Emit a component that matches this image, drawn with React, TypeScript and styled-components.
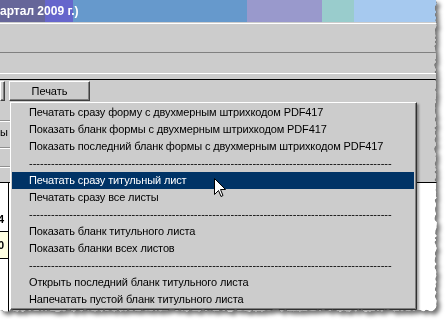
import styled, { createGlobalStyle } from 'styled-components';

const GlobalStyle = createGlobalStyle`
  html, body {
    margin: 0;
    padding: 0;
    background: #ffffff;
  }

  body {
    font-family: 'Liberation Sans', Arial, sans-serif;
  }
`;

const MENU_ITEMS: (string | null)[] = [
  'Печатать сразу форму с двухмерным штрихкодом PDF417',
  'Показать бланк формы с двухмерным штрихкодом PDF417',
  'Показать последний бланк формы с двухмерным штрихкодом PDF417',
  null,
  'Печатать сразу титульный лист',
  'Печатать сразу все листы',
  null,
  'Показать бланк титульного листа',
  'Показать бланки всех листов',
  null,
  'Открыть последний бланк титульного листа',
  'Напечатать пустой бланк титульного листа',
];

const ACTIVE_INDEX = 4;

// torn paper edge along the right and bottom sides
const tornEdge = (() => {
  let seed = 11;
  const rnd = () => {
    seed = (seed * 9301 + 49297) % 233280;
    return seed / 233280;
  };
  const pts: string[] = ['0 0', '436px 0'];
  for (let y = 2; y < 310; y += 2) {
    pts.push(`${(434.5 + rnd() * 2.5).toFixed(1)}px ${y}px`);
  }
  for (let x = 434; x > 0; x -= 2) {
    pts.push(`${x}px ${(309.5 + rnd() * 2.5).toFixed(1)}px`);
  }
  pts.push('0 311px');
  return `polygon(${pts.join(', ')})`;
})();

export default function App() {
  return (
    <Page>
      <GlobalStyle />
      <Shadow>
        <Sheet>
          <TitleBar>артал 2009 г.)</TitleBar>
          <TopBand />
          <MiddleBand />
          <LowBand />
          <TabRow>
            <TabButton $width={5} />
            <TabButton $width={81}>Печать</TabButton>
          </TabRow>
          <FormArea>
            <FieldLine $height={18} />
            <FieldLine $height={26}>
              <FieldText>ны</FieldText>
            </FieldLine>
            <FieldLine $height={18} />
          </FormArea>
          <GridArea>
            <GridColumn>
              <GridCell $height={24} />
              <GridCell $height={24} $bordered>
                4
              </GridCell>
              <GridCell $height={26} $bordered $yellow>
                0
              </GridCell>
            </GridColumn>
          </GridArea>

          <Menu>
            {MENU_ITEMS.map((item, i) =>
              item === null ? (
                <Separator key={i}>{'-'.repeat(99)}</Separator>
              ) : (
                <MenuItem key={i} $active={i === ACTIVE_INDEX}>
                  {item}
                </MenuItem>
              )
            )}
          </Menu>

          <Cursor width="12" height="20" viewBox="0 0 12 20">
            <path
              d="M0.5 0.5 L0.5 16.5 L4.5 12.5 L7 18.5 L9 17.5 L6.5 11.5 L11.5 11.5 Z"
              fill="#ffffff"
              stroke="#000000"
              strokeWidth="1"
            />
          </Cursor>
        </Sheet>
      </Shadow>
    </Page>
  );
}

const Page = styled.div`
  width: 447px;
  height: 328px;
  background: #ffffff;
  overflow: hidden;
`;

const Shadow = styled.div`
  width: 440px;
  filter: drop-shadow(0 0 0.6px #000000) drop-shadow(3px 3px 2px rgba(0, 0, 0, 0.55));
`;

const Sheet = styled.div`
  position: relative;

  display: flex;
  flex-direction: column;

  width: 440px;
  height: 314px;

  background: #cccccc;
  clip-path: ${tornEdge};
`;

const TitleBar = styled.div`
  height: 22px;
  padding-top: 1px;
  box-sizing: border-box;

  background: linear-gradient(
    to right,
    #666699 0 45px,
    #6666cc 45px 73px,
    #6699cc 73px 247px,
    #9999cc 247px 322px,
    #99cccc 322px 354px,
    #a6c9ef 354px
  );

  color: #ffffff;
  font-size: 12px;
  font-weight: 700;
  line-height: 20px;
  white-space: nowrap;
`;

const TopBand = styled.div`
  height: 28px;
  margin-top: 1px;
  border-top: 1px solid #ffffff;
  border-bottom: 1px solid #808080;
`;

const MiddleBand = styled.div`
  height: 20px;
  border-bottom: 1px solid #ffffff;
`;

const LowBand = styled.div`
  height: 5px;
  border-bottom: 1px solid #000000;
`;

const TabRow = styled.div`
  display: flex;
  gap: 4px;

  height: 22px;
  padding-top: 1px;
  box-sizing: border-box;
`;

const TabButton = styled.div<{ $width: number }>`
  display: flex;
  justify-content: center;
  align-items: center;

  width: ${(p) => p.$width}px;
  height: 20px;
  box-sizing: border-box;
  border-top: 1px solid #ffffff;
  border-left: 1px solid #ffffff;
  border-right: 1px solid #404040;
  border-bottom: 1px solid #404040;
  box-shadow: inset -1px -1px 0 #808080;

  color: #000000;
  font-size: 11px;
`;

const FormArea = styled.div`
  display: flex;
  flex-direction: column;

  width: 10px;
  height: 80px;
`;

const FieldLine = styled.div<{ $height: number }>`
  height: ${(p) => p.$height}px;
  border-bottom: 1px solid #909090;
  box-shadow: 0 1px 0 #ffffff;
  overflow: hidden;
`;

const FieldText = styled.div`
  margin: 5px 0 0 -6px;

  color: #000000;
  font-size: 11px;
  white-space: nowrap;
`;

const GridArea = styled.div`
  flex: 1;

  border-top: 1px solid #000000;
  background: #ffffff;
`;

const GridColumn = styled.div`
  display: flex;
  flex-direction: column;

  width: 9px;
  height: 100%;
  box-sizing: border-box;
  border-right: 1px solid #000000;
`;

const GridCell = styled.div<{ $height: number; $bordered?: boolean; $yellow?: boolean }>`
  display: flex;
  justify-content: flex-end;
  align-items: center;

  height: ${(p) => p.$height}px;
  padding-right: 4px;
  border-bottom: ${(p) => (p.$bordered ? '1px solid #000000' : 'none')};
  overflow: hidden;

  background: ${(p) => (p.$yellow ? '#ffffe1' : 'transparent')};

  color: #000000;
  font-size: 11px;
  font-weight: 700;
`;

const Menu = styled.div`
  position: absolute;
  top: 102px;
  left: 10px;

  display: flex;
  flex-direction: column;

  width: 407px;
  padding: 1px 2px 1px 1px;
  box-sizing: border-box;
  border-top: 1px solid #ffffff;
  border-left: 1px solid #ffffff;
  border-right: 1px solid #303030;
  border-bottom: 1px solid #303030;
  box-shadow: inset -1px -1px 0 #808080, 2px 2px 2px rgba(0, 0, 0, 0.35);

  background: #cccccc;
`;

const MenuItem = styled.div<{ $active: boolean }>`
  height: 17px;
  padding-left: 17px;

  background: ${(p) => (p.$active ? '#003366' : 'transparent')};

  color: ${(p) => (p.$active ? '#ffffff' : '#000000')};
  font-size: 11px;
  letter-spacing: -0.12px;
  line-height: 17px;
  white-space: nowrap;
`;

const Separator = styled.div`
  height: 17px;
  padding-left: 17px;
  overflow: hidden;

  color: #000000;
  font-size: 11px;
  line-height: 17px;
  white-space: nowrap;
`;

const Cursor = styled.svg`
  position: absolute;
  top: 178px;
  left: 214px;
`;
